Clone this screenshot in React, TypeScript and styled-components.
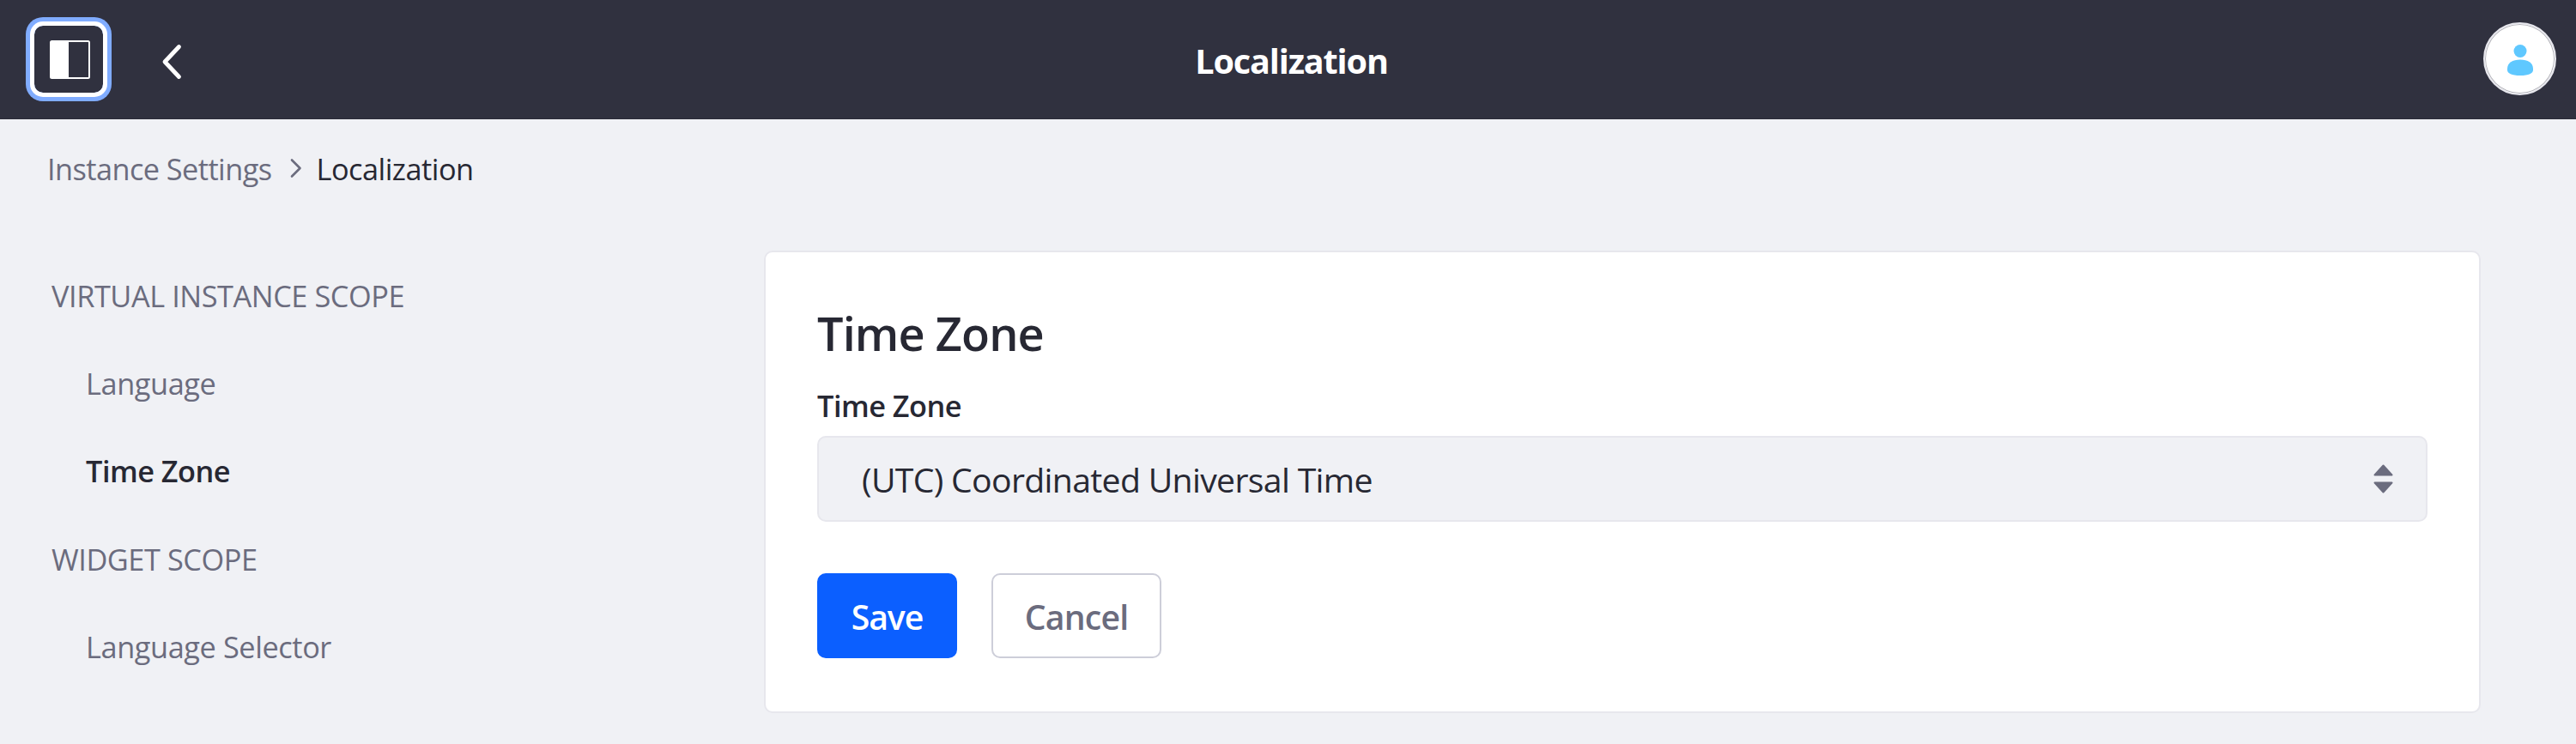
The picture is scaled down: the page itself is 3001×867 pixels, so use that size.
import React from 'react';
import styled, { createGlobalStyle } from 'styled-components';

const colors = {
  header: '#30313f',
  page: '#f0f1f5',
  dark: '#272833',
  muted: '#6b6c7e',
  border: '#e7e7ed',
  outline: '#cdced9',
  primary: '#0b5fff',
  focus: '#80acff',
  avatar: '#5fc8ff',
};

const GlobalStyle = createGlobalStyle`
  * { box-sizing: border-box; }
  body {
    margin: 0;
    background: ${colors.page};
    color: ${colors.dark};
    font-family: 'Segoe UI', 'Open Sans', 'Noto Sans', sans-serif;
    font-size: 34.3px;
  }
  button { font-family: inherit; cursor: pointer; }
`;

const Page = styled.div`
  display: flex;
  flex-direction: column;
  width: 100%;
  height: 867px;
  overflow: hidden;
`;

const Header = styled.header`
  display: grid;
  grid-template-columns: 1fr auto 1fr;
  align-items: center;
  height: 139px;
  padding: 0 23px 0 40px;
  background: ${colors.header};
  border-bottom: 1px solid #2b2c39;
`;

const HeaderStart = styled.div`
  display: flex;
  align-items: center;
  gap: 68px;
`;

const MenuToggle = styled.button`
  display: flex;
  align-items: center;
  justify-content: center;
  width: 80px;
  height: 78px;
  padding: 0 0 0 3px;
  border: 0;
  border-radius: 10px;
  background: transparent;
  box-shadow: 0 0 0 5px #fff, 0 0 0 10px ${colors.focus};
`;

const BackLink = styled.a`
  display: flex;
  margin-top: 5px;
`;

const HeaderTitle = styled.h1`
  margin: 3px 0 0;
  padding-right: 9px;
  color: #fff;
  font-size: 39.5px;
  font-weight: 700;
  line-height: 54px;
  letter-spacing: -1.1px;
`;

const Avatar = styled.div`
  display: flex;
  align-items: center;
  justify-content: center;
  justify-self: end;
  width: 85px;
  height: 85px;
  margin-bottom: 1px;
  padding-top: 3px;
  border: 2px solid ${colors.border};
  border-radius: 50%;
  background: #fff;
  box-shadow: inset 0 0 0 1px #b5b5bb;
`;

const Breadcrumb = styled.nav`
  display: flex;
  align-items: center;
  height: 114px;
  padding-left: 55px;
`;

const Crumb = styled.span<{ $current?: boolean }>`
  margin-top: 2px;
  color: ${(p) => (p.$current ? colors.dark : colors.muted)};
  letter-spacing: ${(p) => (p.$current ? '-0.5px' : '-0.56px')};
  line-height: 50px;
`;

const CrumbSeparator = styled.svg`
  width: 14px;
  height: 24px;
  margin: 0 17px 1px 21px;
`;

const Content = styled.main`
  display: flex;
  flex: 1;
  align-items: flex-start;
  margin-top: 39px;
`;

const Sidebar = styled.nav`
  display: flex;
  flex-direction: column;
  width: 890px;
  padding: 1.5px 0 0 60px;
`;

const ScopeTitle = styled.div`
  height: 102.4px;
  color: ${colors.muted};
  line-height: 102.4px;
  letter-spacing: -0.43px;
  text-transform: uppercase;
`;

const ScopeLink = styled.a<{ $active?: boolean }>`
  height: 102.4px;
  padding-left: 40px;
  color: ${(p) => (p.$active ? colors.dark : colors.muted)};
  font-weight: ${(p) => (p.$active ? 600 : 400)};
  line-height: 102.4px;
  letter-spacing: ${(p) => (p.$active ? '-0.5px' : '-0.4px')};
`;

const Card = styled.form`
  display: flex;
  flex-direction: column;
  width: 2000px;
  height: 539px;
  padding: 60px;
  border: 2px solid ${colors.border};
  border-radius: 10px;
  background: #fff;
`;

const CardTitle = styled.h2`
  margin: 0;
  font-size: 54px;
  font-weight: 600;
  line-height: 68px;
  letter-spacing: -0.87px;
`;

const FieldLabel = styled.label`
  margin-top: 25px;
  font-weight: 600;
  line-height: 52px;
  letter-spacing: -0.5px;
`;

const SelectBox = styled.div`
  display: flex;
  align-items: center;
  justify-content: space-between;
  height: 100px;
  margin-top: 9px;
  padding: 0 38px 0 50px;
  border: 2px solid ${colors.border};
  border-radius: 10px;
  background: ${colors.page};
`;

const SelectValue = styled.span`
  padding-top: 2px;
  font-size: 39.2px;
  line-height: 54px;
  letter-spacing: -0.67px;
`;

const Actions = styled.div`
  display: flex;
  gap: 40px;
  margin-top: 60px;
`;

const Button = styled.button<{ $primary?: boolean }>`
  width: ${(p) => (p.$primary ? '163px' : '198px')};
  height: 99px;
  padding: 3px 0 0;
  border: 2px solid ${(p) => (p.$primary ? colors.primary : colors.outline)};
  border-radius: 10px;
  background: ${(p) => (p.$primary ? colors.primary : '#fff')};
  color: ${(p) => (p.$primary ? '#fff' : colors.muted)};
  font-size: 39.2px;
  font-weight: 600;
  line-height: 54px;
  letter-spacing: ${(p) => (p.$primary ? '-1.1px' : '-0.8px')};
`;

const PanelIcon = () => (
  <svg width="47" height="45" viewBox="0 0 47 45" aria-hidden="true">
    <rect x="1" y="1" width="45" height="43" rx="1.5" fill="none" stroke="#fff" strokeWidth="2" />
    <rect x="1" y="1" width="21" height="43" fill="#fff" />
  </svg>
);

const BackIcon = () => (
  <svg width="24" height="46" viewBox="0 0 24 46" aria-hidden="true">
    <path d="M20.5 5.5 4 23l16.5 17.5" fill="none" stroke="#fff" strokeWidth="4.8" strokeLinecap="round" strokeLinejoin="round" />
  </svg>
);

const UserIcon = () => (
  <svg width="30" height="36" viewBox="0 0 30 36" aria-hidden="true">
    <circle cx="15" cy="7.5" r="7.5" fill={colors.avatar} />
    <path d="M0 28C0 21.5 6 17.5 15 17.5S30 21.5 30 28V29.500C30 33.500 25 36 15 36S0 33.500 0 29.500Z" fill={colors.avatar} />
  </svg>
);

const SortIcon = () => (
  <svg width="23" height="34" viewBox="0 0 23 34" aria-hidden="true">
    <g fill={colors.muted} stroke={colors.muted} strokeWidth="2" strokeLinejoin="round">
      <path d="M1.5 12.5 11.5 1.5l10 11Z" />
      <path d="M1.5 21.5 11.5 32.5l10-11Z" />
    </g>
  </svg>
);

export default function App() {
  return (
    <Page>
      <GlobalStyle />
      <Header>
        <HeaderStart>
          <MenuToggle type="button" aria-label="Toggle menu"><PanelIcon /></MenuToggle>
          <BackLink aria-label="Back"><BackIcon /></BackLink>
        </HeaderStart>
        <HeaderTitle>Localization</HeaderTitle>
        <Avatar><UserIcon /></Avatar>
      </Header>
      <Breadcrumb>
        <Crumb>Instance Settings</Crumb>
        <CrumbSeparator viewBox="0 0 14 24" aria-hidden="true">
          <path d="M2 2.5 11.5 12 2 21.5" fill="none" stroke={colors.muted} strokeWidth="2.6" strokeLinecap="round" strokeLinejoin="round" />
        </CrumbSeparator>
        <Crumb $current>Localization</Crumb>
      </Breadcrumb>
      <Content>
        <Sidebar>
          <ScopeTitle>Virtual Instance Scope</ScopeTitle>
          <ScopeLink>Language</ScopeLink>
          <ScopeLink $active>Time Zone</ScopeLink>
          <ScopeTitle>Widget Scope</ScopeTitle>
          <ScopeLink>Language Selector</ScopeLink>
        </Sidebar>
        <Card>
          <CardTitle>Time Zone</CardTitle>
          <FieldLabel>Time Zone</FieldLabel>
          <SelectBox>
            <SelectValue>(UTC) Coordinated Universal Time</SelectValue>
            <SortIcon />
          </SelectBox>
          <Actions>
            <Button type="button" $primary>Save</Button>
            <Button type="button">Cancel</Button>
          </Actions>
        </Card>
      </Content>
    </Page>
  );
}
